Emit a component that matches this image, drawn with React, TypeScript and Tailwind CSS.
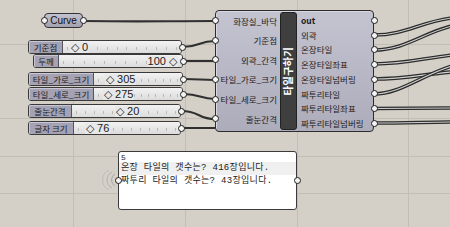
import React from 'react';

const KR = "font-['Noto_Sans_CJK_KR',sans-serif]";

function Dot({ className = '' }: { className?: string }) {
  return (
    <div
      className={`absolute w-[7px] h-[7px] rounded-full bg-[#f4f4f4] border-[1.5px] border-[#1e1e1e] ${className}`}
    />
  );
}

type SliderProps = {
  x: number;
  y: number;
  w: number;
  labelW: number;
  label: string;
  value: string;
  align: 'left' | 'right' | 'center';
  valuePad?: number;
};

function Slider({ x, y, w, labelW, label, value, align, valuePad = 6 }: SliderProps) {
  const ticks = Array.from({ length: 12 }, (_, i) => i);
  return (
    <div className="absolute h-[14px]" style={{ left: x, top: y, width: w }}>
      <div className="flex h-full rounded-[3px] border border-[#3a3a3a] bg-[#e6e6e6] overflow-hidden">
        <div
          className={`flex items-center justify-center shrink-0 h-full bg-[#a4a2b3] border-r border-[#55535f] shadow-[inset_1px_1px_0_#c9c7d6] text-[8.5px] leading-none text-[#1c1c1c] ${KR}`}
          style={{ width: labelW }}
        >
          {label}
        </div>
        <div className="relative flex-1 h-full bg-gradient-to-b from-[#f2f2f2] to-[#dcdcdc]">
          <div className="absolute left-[4px] right-[4px] top-[6px] flex justify-between">
            {ticks.map((t) => (
              <div key={t} className="w-px h-[3px] bg-[#b9b9b9]" />
            ))}
          </div>
          <div
            className={`absolute inset-0 flex items-center text-[11px] leading-none text-[#222] font-['Liberation_Sans',sans-serif] ${
              align === 'left' ? 'justify-start' : align === 'right' ? 'justify-end' : 'justify-center'
            }`}
            style={align === 'left' ? { paddingLeft: valuePad } : align === 'right' ? { paddingRight: valuePad } : {}}
          >
            <span className="bg-[#e8e8e8] px-[1px]">{align === 'right' ? `${value} ◇` : `◇ ${value}`}</span>
          </div>
        </div>
      </div>
      <Dot className="right-[-3.5px] top-[3.5px]" />
    </div>
  );
}

const inputs = ['화장실_바닥', '기준점', '외곽_간격', '타일_가로_크기', '타일_세로_크기', '줄눈간격'];
const outputs = ['out', '외곽', '온장타일', '온장타일좌표', '온장타일넘버링', '짜투리타일', '짜투리타일좌표', '짜투리타일넘버링'];

function Wire({ d, double }: { d: string; double?: boolean }) {
  if (double) {
    return (
      <>
        <path d={d} fill="none" stroke="#2c2c2c" strokeWidth={3.6} />
        <path d={d} fill="none" stroke="#cfcfcf" strokeWidth={1.1} />
      </>
    );
  }
  return <path d={d} fill="none" stroke="#303030" strokeWidth={2.2} />;
}

export default function App() {
  return (
    <div className="relative w-[450px] h-[227px] overflow-hidden bg-[#d4d0c8]">
      {/* canvas grid + wires */}
      <svg className="absolute inset-0" width={450} height={227}>
        {[44, 118, 156, 193].map((y) => (
          <line key={y} x1={0} x2={450} y1={y + 0.5} y2={y + 0.5} stroke="#c2beb6" strokeWidth={1} />
        ))}
        {[73, 185, 297, 408].map((x) => (
          <line key={x} y1={0} y2={227} x1={x + 0.5} x2={x + 0.5} stroke="#c2beb6" strokeWidth={1} />
        ))}
        <Wire d="M83,21 C150,22 160,21 215,21" />
        <Wire d="M182,47 C200,47 198,41 215,41" />
        <Wire d="M184,61 L215,61" />
        <Wire d="M184,79 C200,79 200,80 215,80" />
        <Wire d="M184,94 C200,94 200,99 215,99" />
        <Wire d="M181,111 C200,111 198,119 215,119" />
        <Wire d="M181,128 L215,128" />

        <Wire double d="M374,35 C405,35 420,22 452,18" />
        <Wire double d="M374,50 C405,50 425,32 452,26" />
        <Wire double d="M374,64 C405,64 425,58 452,55" />
        <Wire double d="M374,79 C405,79 425,74 452,72" />
        <Wire double d="M374,94 C400,94 420,76 452,66" />
        <Wire double d="M374,108.5 C405,108.5 430,108 452,108" />
        <Wire double d="M374,123 C405,123 430,122 452,122" />
        {/* wireless receiver arcs on panel */}
        <path d="M115,174 A7,7 0 0 0 115,186" fill="none" stroke="#9a9a9a" strokeWidth={0.8} />
        <path d="M112,172 A9,9 0 0 0 112,188" fill="none" stroke="#aaaaaa" strokeWidth={0.8} />
        <path d="M109,170 A11,11 0 0 0 109,190" fill="none" stroke="#b8b8b8" strokeWidth={0.8} />
      </svg>

      {/* Curve param */}
      <div className="absolute left-[44px] top-[13px] w-[39px] h-[15px]">
        <div className="h-full rounded-[4px] border border-[#333] bg-gradient-to-b from-[#c3c2cf] to-[#a3a1b1] flex items-center justify-center text-[10px] leading-none text-[#111] font-['Liberation_Sans',sans-serif]">
          Curve
        </div>
        <Dot className="left-[-3.5px] top-[4px]" />
        <Dot className="right-[-3.5px] top-[4px]" />
      </div>

      <Slider x={28} y={40} w={154} labelW={34} label="기준점" value="0" align="left" valuePad={7} />
      <Slider x={33} y={54} w={150} labelW={25} label="두께" value="100" align="right" valuePad={4} />
      <Slider x={28} y={72} w={155} labelW={65} label="타일_가로_크기" value="305" align="left" valuePad={11} />
      <Slider x={28} y={87} w={155} labelW={65} label="타일_세로_크기" value="275" align="left" valuePad={9} />
      <Slider x={28} y={104} w={153} labelW={43} label="줄눈간격" value="20" align="left" valuePad={43} />
      <Slider x={28} y={121} w={153} labelW={45} label="글자 크기" value="76" align="left" valuePad={11} />

      {/* main component */}
      <div className="absolute left-[215px] top-[10px] w-[159px] h-[122px] flex rounded-[4px] border border-[#2c2c2c] bg-gradient-to-b from-[#c4c3d0] to-[#adacbb] shadow-[inset_1px_1px_0_#d8d7e2]">
        <div className={`flex flex-col w-[64px] text-[8.5px] leading-none text-[#1c1c1c] ${KR}`}>
          {inputs.map((t) => (
            <div key={t} className="relative h-[19.6px] flex items-center justify-end pr-[3px]">
              <Dot className="left-[-4.5px] top-[6.3px]" />
              {t}
            </div>
          ))}
        </div>
        <div className="mt-[1px] w-[17px] h-[118px] rounded-[3px] border border-[#222] bg-[#3f3f3f] flex items-center justify-center">
          <span className={`-rotate-90 whitespace-nowrap text-[10.5px] font-bold leading-none text-white ${KR}`}>
            타일구하기
          </span>
        </div>
        <div className={`flex-1 flex flex-col pt-[2px] text-[8.5px] leading-none text-[#1c1c1c] ${KR}`}>
          {outputs.map((t) => (
            <div key={t} className={`relative h-[14.7px] flex items-center pl-[4px] ${t === 'out' ? 'font-bold' : ''}`}>
              {t}
              <Dot className="right-[-4.5px] top-[3.85px]" />
            </div>
          ))}
        </div>
      </div>

      {/* panel */}
      <div className="absolute left-[118px] top-[151px] w-[179px] h-[59px]">
        <div className="h-full rounded-[3px] border border-[#3a3a3a] bg-white pt-[1px] font-['Liberation_Mono','Noto_Sans_CJK_KR',monospace] text-[#222]">
          <div className="px-[2px] text-[8px] leading-[9px]">5</div>
          <div className="px-[2px] bg-[#f0f0f0] text-[9px] tracking-[0.3px] leading-[13px]">온장 타일의 갯수는? 416장입니다.</div>
          <div className="px-[2px] text-[9px] tracking-[0.3px] leading-[13px]">짜투리 타일의 갯수는? 43장입니다.</div>
        </div>
        <Dot className="left-[-3.5px] top-[25.5px]" />
        <Dot className="right-[-3.5px] top-[25.5px]" />
      </div>
    </div>
  );
}
